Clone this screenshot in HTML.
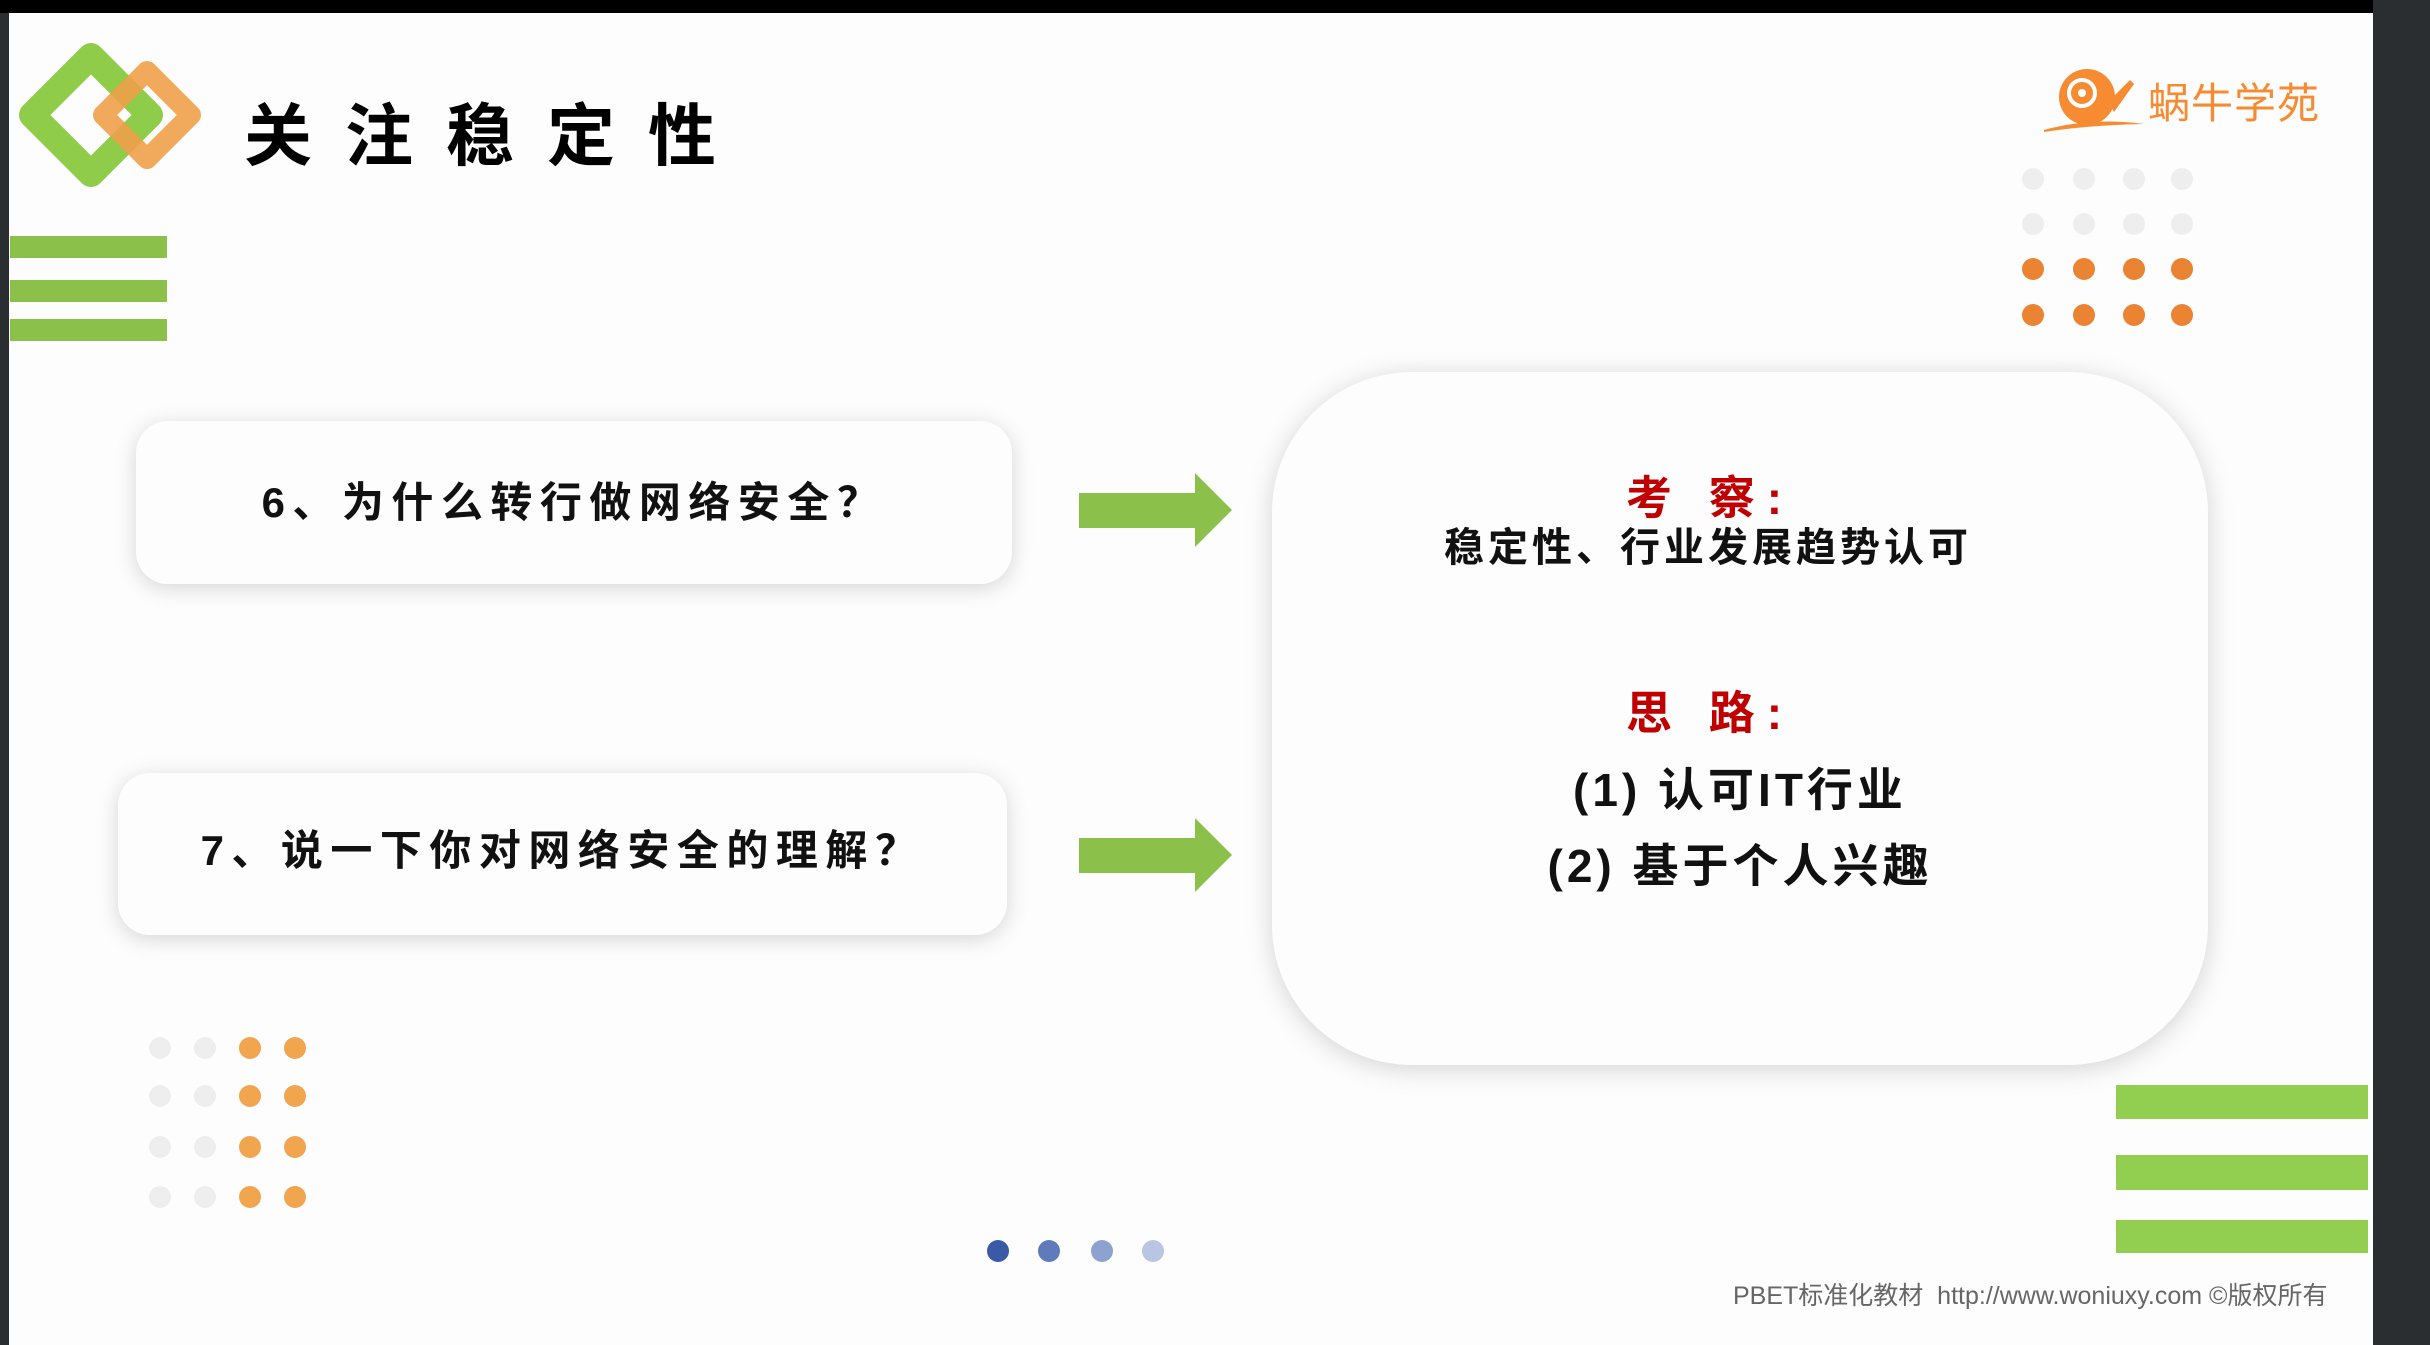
<!DOCTYPE html>
<html><head><meta charset="utf-8"><style>
html,body{margin:0;padding:0;}
body{width:2430px;height:1345px;position:relative;overflow:hidden;background:#2b2e31;font-family:"Liberation Sans","Noto Sans CJK SC",sans-serif;}
#slide{position:absolute;left:9px;top:13px;width:2364px;height:1332px;background:#fdfdfd;}
.a{position:absolute;}
.bar{position:absolute;background:#8bc14a;}
.dot{position:absolute;width:22px;height:22px;border-radius:50%;}
.box{position:absolute;background:#fdfdfd;border-radius:32px;box-shadow:0 4px 22px rgba(0,0,0,0.16);}
.q{position:absolute;left:0;right:0;text-align:center;font-family:"Liberation Sans","Noto Sans CJK SC",sans-serif;font-size:42px;font-weight:bold;letter-spacing:7.5px;color:#111;white-space:nowrap;}
.c{position:absolute;left:1272px;width:936px;text-align:center;white-space:nowrap;font-family:"Liberation Sans","Noto Sans CJK SC",sans-serif;font-weight:bold;}
</style></head><body>
<div class="a" style="left:0;top:0;width:2373px;height:13px;background:#000;"></div>
<div id="slide"></div>

<svg class="a" style="left:0;top:0" width="260" height="200">
  <polygon points="91,56 150,115 91,174 32,115" fill="none" stroke="#8fcc4a" stroke-width="26" stroke-linejoin="round"/>
  <polygon points="147,71 191,115 147,159 103,115" fill="none" stroke="#f0a04a" stroke-width="20" stroke-linejoin="round" opacity="0.9"/>
</svg>
<div class="a" style="left:244px;top:92px;font-size:68px;font-weight:bold;letter-spacing:33px;color:#000;font-family:'Liberation Sans','Noto Sans CJK SC',sans-serif;line-height:90px;">关注稳定性</div>

<div class="bar" style="left:10px;top:236px;width:157px;height:22px;"></div>
<div class="bar" style="left:10px;top:280px;width:157px;height:22px;"></div>
<div class="bar" style="left:10px;top:319px;width:157px;height:22px;"></div>

<!-- logo -->
<svg class="a" style="left:2040px;top:62px" width="110" height="72">
  <circle cx="47" cy="35" r="28" fill="#f68b32"/>
  <circle cx="42" cy="31" r="13" fill="none" stroke="#fff" stroke-width="4"/>
  <circle cx="42" cy="31" r="4" fill="#fff"/>
  <path d="M68 40 L90 18 L94 22 L74 50 Z" fill="#f68b32"/>
  <path d="M4 68 Q50 55 104 62 Q50 63 4 70Z" fill="#f68b32"/>
</svg>
<div class="a" style="left:2148px;top:78px;font-size:42px;color:#f68b32;letter-spacing:1px;font-family:'Liberation Sans','Noto Sans CJK SC',sans-serif;line-height:52px;">蜗牛学苑</div>

<!-- right dots -->
<div class="dot" style="left:2022px;top:168px;background:#eeeeee"></div><div class="dot" style="left:2073px;top:168px;background:#eeeeee"></div><div class="dot" style="left:2123px;top:168px;background:#eeeeee"></div><div class="dot" style="left:2171px;top:168px;background:#eeeeee"></div>
<div class="dot" style="left:2022px;top:213px;background:#eeeeee"></div><div class="dot" style="left:2073px;top:213px;background:#eeeeee"></div><div class="dot" style="left:2123px;top:213px;background:#eeeeee"></div><div class="dot" style="left:2171px;top:213px;background:#eeeeee"></div>
<div class="dot" style="left:2022px;top:258px;background:#ea8433"></div><div class="dot" style="left:2073px;top:258px;background:#ea8433"></div><div class="dot" style="left:2123px;top:258px;background:#ea8433"></div><div class="dot" style="left:2171px;top:258px;background:#ea8433"></div>
<div class="dot" style="left:2022px;top:304px;background:#ea8433"></div><div class="dot" style="left:2073px;top:304px;background:#ea8433"></div><div class="dot" style="left:2123px;top:304px;background:#ea8433"></div><div class="dot" style="left:2171px;top:304px;background:#ea8433"></div>

<!-- question boxes -->
<div class="box" style="left:136px;top:421px;width:876px;height:163px;"><div class="q" style="top:54px;line-height:56px;">6、为什么转行做网络安全？</div></div>
<div class="box" style="left:118px;top:773px;width:889px;height:162px;"><div class="q" style="top:50px;line-height:56px;">7、说一下你对网络安全的理解？</div></div>

<!-- arrows -->
<svg class="a" style="left:1079px;top:473px" width="155" height="75"><polygon points="0,20 116,20 116,0 153,37 116,74 116,55 0,55" fill="#8bc14a"/></svg>
<svg class="a" style="left:1079px;top:818px" width="155" height="75"><polygon points="0,20 116,20 116,0 153,37 116,74 116,55 0,55" fill="#8bc14a"/></svg>

<!-- big box -->
<div class="box" style="left:1272px;top:372px;width:936px;height:693px;border-radius:140px;box-shadow:0 4px 26px rgba(0,0,0,0.17);"></div>
<div class="c" style="left:1242px;top:470px;font-size:46px;color:#c00000;letter-spacing:12px;line-height:56px;">考 察:</div>
<div class="c" style="left:1240px;top:523px;font-size:40px;color:#111;letter-spacing:4px;line-height:50px;">稳定性、行业发展趋势认可</div>
<div class="c" style="left:1242px;top:685px;font-size:46px;color:#c00000;letter-spacing:12px;line-height:56px;">思 路:</div>
<div class="c" style="top:762px;font-size:46px;color:#111;letter-spacing:4px;line-height:56px;">(1) 认可IT行业</div>
<div class="c" style="top:838px;font-size:46px;color:#111;letter-spacing:4px;line-height:56px;">(2) 基于个人兴趣</div>

<!-- bottom-left dots -->
<div class="dot" style="left:149px;top:1037px;background:#eeeeee"></div><div class="dot" style="left:194px;top:1037px;background:#eeeeee"></div><div class="dot" style="left:239px;top:1037px;background:#f0a54e"></div><div class="dot" style="left:284px;top:1037px;background:#f0a54e"></div>
<div class="dot" style="left:149px;top:1085px;background:#eeeeee"></div><div class="dot" style="left:194px;top:1085px;background:#eeeeee"></div><div class="dot" style="left:239px;top:1085px;background:#f0a54e"></div><div class="dot" style="left:284px;top:1085px;background:#f0a54e"></div>
<div class="dot" style="left:149px;top:1136px;background:#eeeeee"></div><div class="dot" style="left:194px;top:1136px;background:#eeeeee"></div><div class="dot" style="left:239px;top:1136px;background:#f0a54e"></div><div class="dot" style="left:284px;top:1136px;background:#f0a54e"></div>
<div class="dot" style="left:149px;top:1186px;background:#eeeeee"></div><div class="dot" style="left:194px;top:1186px;background:#eeeeee"></div><div class="dot" style="left:239px;top:1186px;background:#f0a54e"></div><div class="dot" style="left:284px;top:1186px;background:#f0a54e"></div>

<!-- pagination -->
<div class="dot" style="left:987px;top:1240px;background:#3a5aa8"></div>
<div class="dot" style="left:1038px;top:1240px;background:#5f7bbb"></div>
<div class="dot" style="left:1091px;top:1240px;background:#8ea2d0"></div>
<div class="dot" style="left:1142px;top:1240px;background:#b8c6e3"></div>

<!-- right bars -->
<div class="bar" style="left:2116px;top:1085px;width:252px;height:34px;background:#92ce50;"></div>
<div class="bar" style="left:2116px;top:1155px;width:252px;height:35px;background:#92ce50;"></div>
<div class="bar" style="left:2116px;top:1220px;width:252px;height:33px;background:#92ce50;"></div>

<div class="a" style="left:1733px;top:1280px;font-size:25px;color:#666;white-space:nowrap;line-height:32px;">PBET标准化教材&nbsp; http://www.woniuxy.com ©版权所有</div>
</body></html>
